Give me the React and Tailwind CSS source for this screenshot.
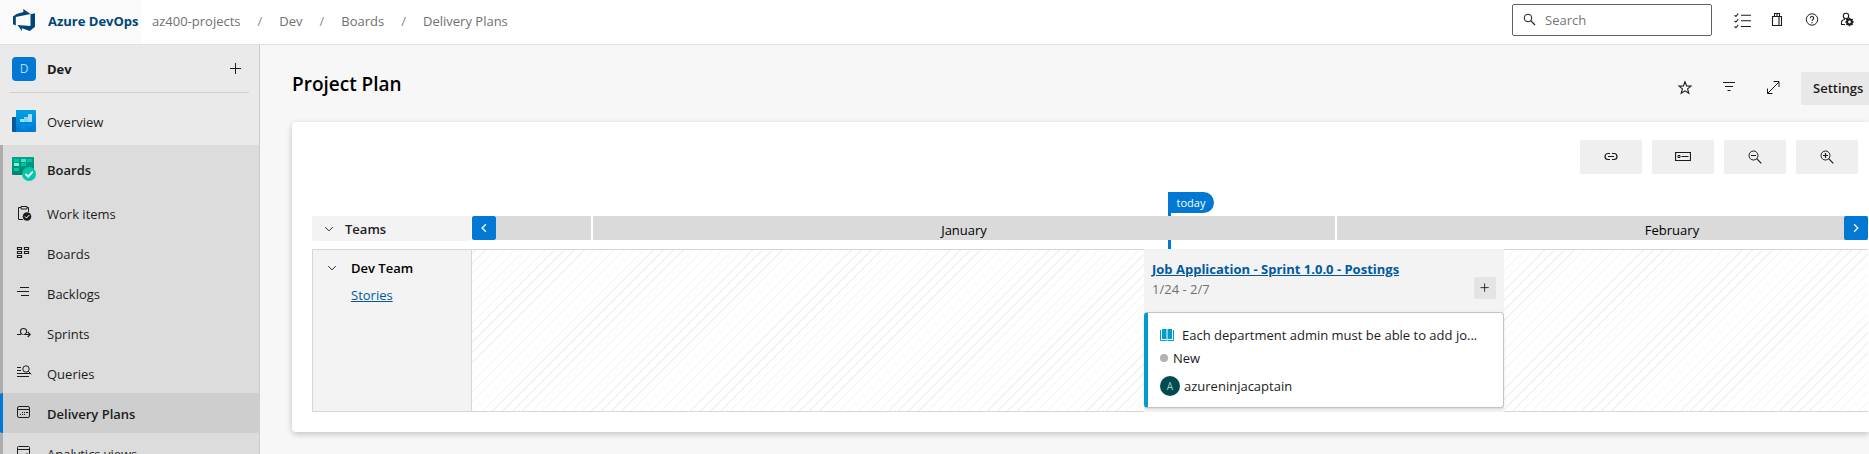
import React from "react";

function Icon({ size = 16, children, className = "" }) {
  return (
    <svg
      width={size}
      height={size}
      viewBox="0 0 16 16"
      fill="none"
      stroke="currentColor"
      strokeWidth="1"
      className={`shrink-0 ${className}`}
      aria-hidden="true"
    >
      {children}
    </svg>
  );
}

const SearchIcon = () => (
  <Icon>
    <circle cx="7" cy="6" r="3.8" />
    <path d="M9.7 8.7 14 13" strokeWidth="1.2" />
  </Icon>
);

const DevOpsLogo = () => (
  <svg width="22" height="22" viewBox="0 0 22 22" className="shrink-0" aria-hidden="true">
    <path
      fill="#004578"
      d="M22 4.2v13.6L16.8 22l-7.9-2.8V22l-4.4-5.9 13 1V5.2ZM17.6 5 10.3 0v3L3.6 5 0 7.4v7.9l2.8 1.2V8.1Z"
    />
  </svg>
);

const OverviewIcon = () => (
  <svg width="24" height="24" viewBox="0 0 24 24" className="shrink-0" aria-hidden="true">
    <defs>
      <linearGradient id="ovBlue" x1="0" y1="0" x2="0" y2="1">
        <stop offset="0" stopColor="#00a2e4" />
        <stop offset="1" stopColor="#0078d4" />
      </linearGradient>
    </defs>
    <path d="M0 8h6v15H1a1 1 0 0 1-1-1z" fill="#005ba1" />
    <path d="M4 1h19a1 1 0 0 1 1 1v20a1 1 0 0 1-1 1H4z" fill="url(#ovBlue)" />
    <path d="M8 10h4v3H8z" fill="#9be3ff" />
    <path d="M12 8h4v5h-4z" fill="#83d3fa" />
    <path d="M16 5h4v8h-4z" fill="#a5dcff" />
    <path d="M9 15h11v2H9zM9 18h5v2H9z" fill="#0091e0" />
  </svg>
);

const BoardsHubIcon = () => (
  <svg width="24" height="24" viewBox="0 0 24 24" className="shrink-0" aria-hidden="true">
    <defs>
      <linearGradient id="bdGreen" x1="0" y1="0" x2="0" y2="1">
        <stop offset="0" stopColor="#00a38a" />
        <stop offset="1" stopColor="#00826f" />
      </linearGradient>
    </defs>
    <path d="M0 0h22v18H1a1 1 0 0 1-1-1z" fill="url(#bdGreen)" />
    <path d="M2 2h5v3H2zM15 2h5v3h-5zM9 6h5v3H9zM2 11h5v3H2z" fill="#00c5a5" />
    <path d="M9 2h5v3H9z" fill="#4be0c5" />
    <path d="M2 6h5v3H2z" fill="#7af5dd" />
    <circle cx="17" cy="17" r="7" fill="#00c8aa" />
    <path d="m13.5 17 2.700 2.700 4.600-5" stroke="#fff" strokeWidth="1.8" fill="none" />
  </svg>
);

const WorkItemsIcon = () => (
  <Icon>
    <path d="M5 2.5H2.5v12H7M11 2.5h1.5V7" />
    <path d="M5 1.500h6v2.500H5z" />
    <circle cx="11" cy="11.5" r="4.3" fill="currentColor" stroke="none" />
    <path d="m9 11.500 1.500 1.500 2.800-3" stroke="#fff" />
  </Icon>
);

const BoardGridIcon = () => (
  <Icon>
    <path d="M1.500 2.500h4v2h-4zM1.500 6.500h4v2h-4zM1.500 10.500h4v2h-4zM8.500 2.500h4v2h-4zM8.500 6.500h4v2h-4z" strokeWidth="1.2" />
  </Icon>
);

const BacklogIcon = () => (
  <Icon>
    <path d="M4 2.500h9M1 6.500h12M5 10.500h8" strokeWidth="1.2" />
  </Icon>
);

const SprintIcon = () => (
  <Icon>
    <path d="M1 9.500h4M6.500 9.500C3.700 8.500 3.600 3.500 7.500 3.500s4 4.500 1.300 6H14M11.700 7l2.500 2.500-2.500 2.500" strokeWidth="1.1" />
  </Icon>
);

const QueriesIcon = () => (
  <Icon>
    <path d="M1 2.500h4M1 5.500h4M1 8.500h13M1 11.500h12" />
    <circle cx="10" cy="4" r="3.2" />
    <path d="m12.300 6.300 3 3" />
  </Icon>
);

const PlanIcon = () => (
  <Icon>
    <rect x="1.500" y="1.500" width="12" height="11" rx="1.500" />
    <path d="M1.500 4.500h12" />
    <path d="M6 7.500h1M8 7.500h1M10 7.500h2M4 9.500h1M6 9.500h1M8 9.500h1" strokeWidth="1.2" />
  </Icon>
);

const AnalyticsIcon = () => (
  <Icon>
    <rect x="1.500" y="1.500" width="12" height="12" rx="1" />
    <path d="M1.500 4.500h12M11 12V8M8 12v-2" />
  </Icon>
);

const ChecklistIcon = () => (
  <Icon size={17}>
    <path d="M6.500 3H16M6.500 8.300H16M6.500 13.600H16M.5 3l1.300 1.200L4 1.500M.5 8.300l1.300 1.200L4 6.800M.5 13.600l1.300 1.200L4 12.100" />
  </Icon>
);

const BagIcon = () => (
  <Icon>
    <path d="M3.500 4.500h9v9h-9zM5.500 4.500v-3h5v3M8 1.500v3M10 4.500v9" strokeWidth="1.1" />
  </Icon>
);

const HelpIcon = () => (
  <Icon>
    <circle cx="8" cy="7.5" r="5.700" />
    <path d="M6.300 6.200c0-2.200 3.400-2.200 3.400 0C9.700 7.500 8 7.400 8 9M8 10v1.200" strokeWidth="1.1" />
  </Icon>
);

const UserSettingsIcon = () => (
  <Icon>
    <circle cx="7" cy="4" r="2.700" strokeWidth="1.1" />
    <path d="M6 7.500C3 7.500 2 9.500 2.500 12.500H6" strokeWidth="1.1" />
    <circle cx="10.500" cy="10" r="2.400" strokeWidth="2" />
    <path d="M10.500 5.800v1.500M10.500 12.500v1.800M6.300 10H8M13 10h1.700M7.500 7l1.200 1.200M12.300 11.800l1.200 1.200M13.500 7l-1.200 1.200M8.700 11.800l-1.200 1.200" strokeWidth="1.500" />
  </Icon>
);

const StarIcon = () => (
  <Icon>
    <path d="m8 1.800 1.600 4.100 4.400.2-3.400 2.800 1.200 4.400L8 10.800l-3.800 2.500 1.200-4.400L2 6.100l4.400-.2z" strokeWidth="1.1" />
  </Icon>
);

const FilterIcon = () => (
  <Icon>
    <path d="M2 2.500h12M4 6.500h8M6.500 10.500h3" strokeWidth="1.1" />
  </Icon>
);

const ExpandIcon = () => (
  <Icon>
    <path d="M2.500 13.500 14 2M8.500 1.500h5.500v5.500M2.500 8.500v5h5" />
  </Icon>
);

const LinkIcon = () => (
  <Icon>
    <path d="M7 4.500H5a3 3 0 0 0 0 6h2M9 4.500h2a3 3 0 0 1 0 6H9M5 7.500h6" strokeWidth="1.2" />
  </Icon>
);

const CardIcon = () => (
  <Icon>
    <path d="M.5 3.500h15v8H.5z" strokeWidth="1.2" />
    <path d="M3 6.500h2v2H3zM6.500 7.500h7" />
  </Icon>
);

const ZoomOutIcon = () => (
  <Icon>
    <circle cx="6.5" cy="6.5" r="4.500" />
    <path d="m9.700 9.700 4.600 4.600M4 6.500h5" strokeWidth="1.2" />
  </Icon>
);

const ZoomInIcon = () => (
  <Icon>
    <circle cx="6.5" cy="6.5" r="4.500" />
    <path d="m9.700 9.700 4.600 4.600M4 6.500h5M6.500 4v5" strokeWidth="1.2" />
  </Icon>
);

const ChevronDown = () => (
  <Icon size={10}>
    <path d="m2 5 6 6 6-6" strokeWidth="1.500" />
  </Icon>
);

const ChevronSide = ({ right }) => (
  <Icon size={12}>
    <path d={right ? "m5.500 3 5 5-5 5" : "m10.500 3-5 5 5 5"} strokeWidth="1.800" />
  </Icon>
);

const StoryIcon = () => (
  <svg width="14" height="12" viewBox="0 0 14 12" className="shrink-0" aria-hidden="true">
    <path d="M2 0h4.500v10H2zM7.500 0H12v10H7.500z" fill="#009ccc" />
    <path d="M.5 1v10.500h5.800l.7-.8.7.8h5.800V1" fill="none" stroke="#009ccc" />
  </svg>
);

const crumbs = ["az400-projects", "Dev", "Boards", "Delivery Plans"];

const boardLinks = [
  { label: "Work items", icon: WorkItemsIcon },
  { label: "Boards", icon: BoardGridIcon },
  { label: "Backlogs", icon: BacklogIcon },
  { label: "Sprints", icon: SprintIcon },
  { label: "Queries", icon: QueriesIcon },
  { label: "Delivery Plans", icon: PlanIcon, active: true },
  { label: "Analytics views", icon: AnalyticsIcon },
];

const headerActions = [
  { label: "Work", icon: ChecklistIcon },
  { label: "Marketplace", icon: BagIcon },
  { label: "Help", icon: HelpIcon },
  { label: "User settings", icon: UserSettingsIcon },
];

const pageActions = [
  { label: "Favorite", icon: StarIcon },
  { label: "Filter", icon: FilterIcon },
  { label: "Full screen", icon: ExpandIcon },
];

const planTools = [
  { label: "Dependencies", icon: LinkIcon },
  { label: "Card size", icon: CardIcon },
  { label: "Zoom out", icon: ZoomOutIcon },
  { label: "Zoom in", icon: ZoomInIcon },
];

function Header() {
  return (
    <header className="flex h-[45px] items-center border-b border-[#e0e0e0] bg-white">
      <a href="#home" className="flex h-full w-[141px] shrink-0 items-center gap-[13px] bg-[#fafafa] pb-1 pl-[13px] font-bold whitespace-nowrap text-[#004578]">
        <DevOpsLogo />
        <span className="pt-[2px]">Azure DevOps</span>
      </a>
      <nav aria-label="Breadcrumb" className="ml-[11px] pb-[2px]">
        <ol className="flex items-center gap-[17px] text-[#707070]">
          {crumbs.map((c, i) => (
            <li key={c} className="flex items-center gap-[17px]">
              {i > 0 && <span className="text-[#8a8a8a]">/</span>}
              <a href="#crumb">{c}</a>
            </li>
          ))}
        </ol>
      </nav>
      <div className="ml-auto flex items-center pb-1">
        <label className="mr-[14px] flex h-8 w-[200px] items-center gap-2 rounded-xs border border-[#616161] px-2">
          <SearchIcon />
          <input type="search" aria-label="Search" placeholder="Search" className="w-full min-w-0 bg-transparent outline-none placeholder:text-[#767676]" />
        </label>
        <div className="flex gap-[3px] pr-[6px]">
          {headerActions.map(({ label, icon: I }) => (
            <button key={label} type="button" aria-label={label} className="flex h-8 w-8 items-center justify-center">
              <I />
            </button>
          ))}
        </div>
      </div>
    </header>
  );
}

function Sidebar() {
  return (
    <nav aria-label="Project" className="w-[260px] shrink-0 border-r border-[#cccccc] bg-[#eaeaea]">
      <div className="mx-[10px] flex h-12 items-center border-b border-[#cfcfcf] pr-[2px] pl-[2px]">
        <span className="flex h-6 w-6 items-center justify-center rounded-sm bg-[#0078d4] text-xs text-[#b5dcf8]">D</span>
        <a href="#dev" className="ml-[11px] font-bold">Dev</a>
        <button type="button" aria-label="Add" className="ml-auto flex h-6 w-6 items-center justify-center">
          <Icon><path d="M8.500 2v11M3 7.500h11" /></Icon>
        </button>
      </div>
      <a href="#overview" className="mt-1 flex h-12 items-center gap-[11px] pl-3">
        <OverviewIcon />
        <span className="pt-[2px]">Overview</span>
      </a>
      <div className="border-l-3 border-[#adadad] bg-[#dcdcdc]">
        <a href="#boards" className="flex h-12 items-center gap-[11px] pl-[9px] font-semibold">
          <BoardsHubIcon />
          <span className="pt-[2px]">Boards</span>
        </a>
        <ul>
          {boardLinks.map(({ label, icon: I, active }) => (
            <li key={label}>
              <a
                href="#hub"
                className={
                  active
                    ? "-ml-[3px] flex h-10 items-center gap-[15px] rounded-xs border-l-3 border-[#0078d4] bg-[#cecece] pl-[13px] font-semibold"
                    : "flex h-10 items-center gap-[15px] pl-[13px]"
                }
              >
                <I />
                <span className="pt-[2px]">{label}</span>
              </a>
            </li>
          ))}
        </ul>
      </div>
    </nav>
  );
}

function WorkCard() {
  return (
    <article className="flex flex-col rounded-[4px] border border-l-4 border-[#c4c4c4] border-l-[#009ccc] bg-white px-3 pt-[11px] pb-[9px] shadow-sm">
      <a href="#item" className="flex h-[22px] items-center gap-2">
        <StoryIcon />
        <span className="truncate">Each department admin must be able to add jo...</span>
      </a>
      <p className="flex h-6 items-center gap-[5px]">
        <span className="h-2 w-2 rounded-full bg-[#b2b2b2]" />
        New
      </p>
      <p className="mt-1 flex h-6 items-center gap-1">
        <span className="flex h-5 w-5 items-center justify-center rounded-full bg-[#004b50] text-[10px] text-[#a9c9cb]">A</span>
        azureninjacaptain
      </p>
    </article>
  );
}

function Timeline() {
  return (
    <div className="ml-5 pr-px">
      <div className="flex">
        <button type="button" className="flex h-[25px] w-[159px] shrink-0 items-center gap-[11px] rounded-xs bg-[#f3f3f3] pl-3 font-semibold text-[#222222]">
          <ChevronDown />
          Teams
        </button>
        <div className="relative ml-px h-[33px] min-w-0 flex-1">
          <div className="absolute -top-6 left-[696px] h-[57px] w-[3px] bg-[#0078d4]" />
          <span className="absolute -top-6 left-[696px] flex h-[21px] w-[46px] items-center justify-center rounded-r-full bg-[#0078d4] text-[11px] text-white">today</span>
          <div className="relative flex h-6 gap-[2px] overflow-hidden text-center leading-7 text-black">
            <button type="button" aria-label="Earlier" className="-mr-[2px] flex w-6 shrink-0 items-center justify-center rounded-xs bg-[#0078d4] text-white">
              <ChevronSide />
            </button>
            <div className="w-[95px] shrink-0 bg-[#dadada]" />
            <div className="w-[742px] shrink-0 bg-[#dadada]">January</div>
            <div className="w-[670px] shrink-0 bg-[#dadada]">February</div>
            <button type="button" aria-label="Later" className="absolute top-0 right-0 flex h-6 w-6 items-center justify-center rounded-xs bg-[#0078d4] text-white">
              <ChevronSide right />
            </button>
          </div>
        </div>
      </div>
      <div className="flex border border-r-0 border-[#d6d6d6]">
        <div className="flex w-[159px] shrink-0 gap-[14px] border-r border-[#d6d6d6] bg-[#f3f3f3] pt-2 pl-[14px]">
          <button type="button" aria-label="Collapse Dev Team" className="flex h-5 items-center"><ChevronDown /></button>
          <div>
            <h2 className="font-semibold text-black">Dev Team</h2>
            <a href="#stories" className="mt-[7px] block text-[#005a9e] underline">Stories</a>
          </div>
        </div>
        <div className="min-w-0 flex-1 bg-[repeating-linear-gradient(-45deg,#ffffff_0px,#ffffff_6px,#f1f1f1_6px,#f1f1f1_7px)]">
          <section className="-my-px ml-[672px] w-[360px] bg-[#f3f3f3] pb-1">
            <div className="flex h-[63px] justify-between pt-[10px] pr-2 pl-2">
              <div className="leading-5">
                <a href="#sprint" className="block font-bold text-[#005a9e] underline">Job Application - Sprint 1.0.0 - Postings</a>
                <p className="text-[#707070]">1/24 - 2/7</p>
              </div>
              <button type="button" aria-label="Add item" className="mt-[18px] flex h-[22px] w-[22px] items-center justify-center rounded-xs bg-[#e4e4e4]">
                <Icon size={12}><path d="M7.500 2v11M2 7.500h11" strokeWidth="1.200" /></Icon>
              </button>
            </div>
            <WorkCard />
          </section>
        </div>
      </div>
    </div>
  );
}

export default function App() {
  return (
    <div className="flex h-screen flex-col overflow-hidden bg-[#f7f7f7] font-['Open_Sans',sans-serif] text-[13px] leading-5 text-[#1c1c1c]">
      <Header />
      <div className="flex min-h-0 flex-1">
        <Sidebar />
        <main className="min-w-0 flex-1 overflow-hidden pl-8">
          <div className="flex h-[77px] items-center">
            <h1 className="text-[19px] font-semibold text-black">Project Plan</h1>
            <div className="mt-[9px] ml-auto flex items-center gap-3">
              {pageActions.map(({ label, icon: I }) => (
                <button key={label} type="button" aria-label={label} className="flex h-8 w-8 items-center justify-center">
                  <I />
                </button>
              ))}
              <button type="button" className="h-[33px] w-[68px] rounded-l-xs bg-[#e8e8e8] pl-3 text-left font-semibold">Settings</button>
            </div>
          </div>
          <section className="rounded-l-[4px] bg-white pb-5 shadow-[0_2px_6px_#00000038]">
            <div className="flex justify-end gap-[10px] pt-[18px] pr-[11px] pb-[42px]">
              {planTools.map(({ label, icon: I }) => (
                <button key={label} type="button" aria-label={label} className="flex h-[34px] w-[62px] items-center justify-center rounded-xs bg-[#efefef]">
                  <I />
                </button>
              ))}
            </div>
            <Timeline />
          </section>
        </main>
      </div>
    </div>
  );
}
